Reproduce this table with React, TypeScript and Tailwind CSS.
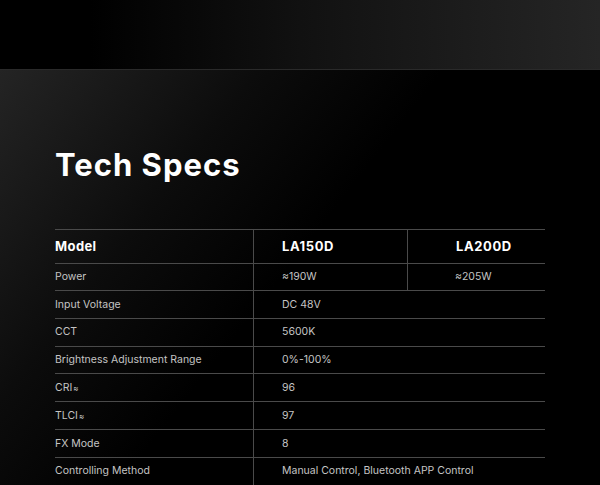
import React from "react";

const rows: { label: React.ReactNode; a: string; b?: string }[] = [
  { label: "Power", a: "≈190W", b: "≈205W" },
  { label: "Input Voltage", a: "DC 48V" },
  { label: "CCT", a: "5600K" },
  { label: "Brightness Adjustment Range", a: "0%-100%" },
  {
    label: (
      <>
        CRI<span className="text-[8px] ml-[1px]">≈</span>
      </>
    ),
    a: "96",
  },
  {
    label: (
      <>
        TLCI<span className="text-[8px] ml-[1px]">≈</span>
      </>
    ),
    a: "97",
  },
  { label: "FX Mode", a: "8" },
  { label: "Controlling Method", a: "Manual Control, Bluetooth APP Control" },
];

export default function App() {
  return (
    <div
      className="w-[600px] h-[485px] overflow-hidden bg-black text-white"
      style={{ fontFamily: "Inter, 'Noto Sans', sans-serif" }}
    >
      <div className="h-[70px] border-b border-[#2a2a2a] bg-[linear-gradient(90deg,#000_15%,#111_50%,#252525_100%)]" />
      <div className="h-[415px] bg-[linear-gradient(128deg,#242424_0%,#0c0c0c_28%,#000_48%)] px-[55px] pt-[77px]">
        <h1 className="text-[31px] leading-[36px] font-bold tracking-[1px] text-white">
          Tech Specs
        </h1>
        <div className="mt-[46px] w-[490px]">
          <div className="grid grid-cols-[199px_154px_137px] h-[34px] border-t border-[#4a4a4a]">
            <div className="flex items-center text-[13px] font-bold tracking-[0.4px] border-r border-[#4a4a4a]">
              Model
            </div>
            <div className="flex items-center pl-[28px] text-[13px] font-bold tracking-[0.6px] border-r border-[#4a4a4a]">
              LA150D
            </div>
            <div className="flex items-center pl-[48px] text-[13px] font-bold tracking-[0.6px]">
              LA200D
            </div>
          </div>
          {rows.map((r, i) => (
            <div
              key={i}
              className={
                r.b
                  ? "grid grid-cols-[199px_154px_137px] h-[27px] border-t border-[#4a4a4a] text-[10.5px] text-[#c4c4c4]"
                  : "grid grid-cols-[199px_291px] h-[27.8px] border-t border-[#4a4a4a] text-[10.5px] text-[#c4c4c4]"
              }
            >
              <div className="flex items-center border-r border-[#4a4a4a]">{r.label}</div>
              <div
                className={
                  r.b
                    ? "flex items-center pl-[28px] border-r border-[#4a4a4a]"
                    : "flex items-center pl-[28px]"
                }
              >
                {r.a}
              </div>
              {r.b && <div className="flex items-center pl-[47px]">{r.b}</div>}
            </div>
          ))}
        </div>
      </div>
    </div>
  );
}
